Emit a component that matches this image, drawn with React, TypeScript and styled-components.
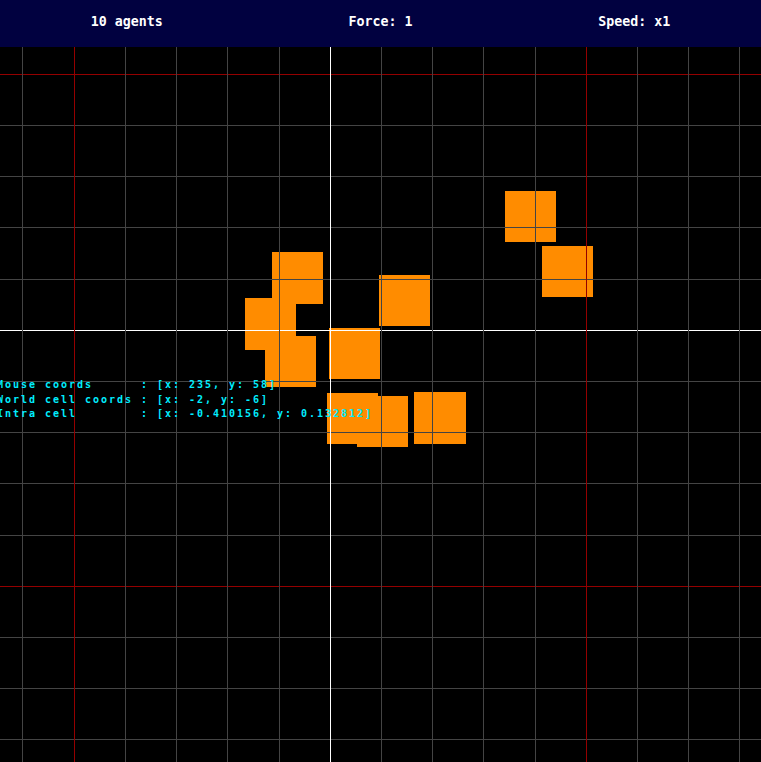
import React from "react";
import styled, { createGlobalStyle } from "styled-components";

const Global = createGlobalStyle`
  html, body { margin: 0; padding: 0; background: #000; overflow: hidden; }
  #root { width: 761px; height: 762px; }
`;

const Screen = styled.div`
  width: 761px;
  height: 762px;
  display: flex;
  flex-direction: column;
  background: #000;
  overflow: hidden;
`;

const HudBar = styled.header`
  height: 47px;
  box-sizing: border-box;
  padding-top: 14px;
  display: flex;
  background: #010140;
  flex-shrink: 0;
`;

const HudItem = styled.div`
  flex: 1;
  text-align: center;
  color: #ffffff;
  font-family: "DejaVu Sans Mono", "Liberation Mono", monospace;
  font-weight: bold;
  font-size: 13.3px;
  line-height: 16px;
  white-space: pre;
`;

const Viewport = styled.main`
  position: relative;
  flex: 1;
  overflow: hidden;
`;

const Board = styled.svg`
  display: block;
  shape-rendering: crispEdges;
`;

const DebugOverlay = styled.div`
  position: absolute;
  left: -3px;
  top: ${378 - 47}px;
  display: flex;
  flex-direction: column;
`;

const DebugLine = styled.div`
  color: #00eeff;
  font-family: "DejaVu Sans Mono", "Liberation Mono", monospace;
  font-weight: bold;
  font-size: 10px;
  letter-spacing: 1.98px;
  line-height: 14.6px;
  white-space: pre;
`;

const CELL = 51.2;
const ORIGIN = 330.2;
const ks = Array.from({ length: 15 }, (_, i) => i - 6);
const pos = (k: number) => Math.floor(ORIGIN + k * CELL);
const lineColor = (k: number) =>
  k === 0 ? "#ffffff" : k % 5 === 0 ? "#940000" : "#444444";

const agents = [
  { x: 272, y: 252, w: 51, h: 52 },
  { x: 245, y: 298, w: 51, h: 52 },
  { x: 265, y: 336, w: 51, h: 51 },
  { x: 379, y: 275, w: 51, h: 51 },
  { x: 329, y: 328, w: 51, h: 51 },
  { x: 327, y: 393, w: 51, h: 51 },
  { x: 357, y: 396, w: 51, h: 51 },
  { x: 414, y: 392, w: 52, h: 52 },
  { x: 505, y: 191, w: 51, h: 51 },
  { x: 542, y: 246, w: 51, h: 51 },
];

const debugLines = [
  "Mouse coords      : [x: 235, y: 58]",
  "World cell coords : [x: -2, y: -6]",
  "Intra cell        : [x: -0.410156, y: 0.132812]",
];

export default function App() {
  const order = [...ks].sort((a, b) => (a === 0 ? 1 : 0) - (b === 0 ? 1 : 0) || (Math.abs(a % 5) === 0 ? 1 : 0) - (Math.abs(b % 5) === 0 ? 1 : 0));
  return (
    <>
      <Global />
      <Screen>
        <HudBar>
          <HudItem>10 agents</HudItem>
          <HudItem>Force: 1</HudItem>
          <HudItem>Speed: x1</HudItem>
        </HudBar>
        <Viewport>
          <Board width={761} height={715} viewBox="0 47 761 715">
            {agents.map((a, i) => (
              <rect key={i} x={a.x} y={a.y} width={a.w} height={a.h} fill="#ff8c00" />
            ))}
            {order.map((k) => (
              <rect key={"h" + k} x={0} y={pos(k)} width={761} height={1} fill={lineColor(k)} />
            ))}
            {order.map((k) => (
              <rect key={"v" + k} x={pos(k)} y={0} width={1} height={762} fill={lineColor(k)} />
            ))}
          </Board>
          <DebugOverlay>
            {debugLines.map((l, i) => (
              <DebugLine key={i}>{l}</DebugLine>
            ))}
          </DebugOverlay>
        </Viewport>
      </Screen>
    </>
  );
}
